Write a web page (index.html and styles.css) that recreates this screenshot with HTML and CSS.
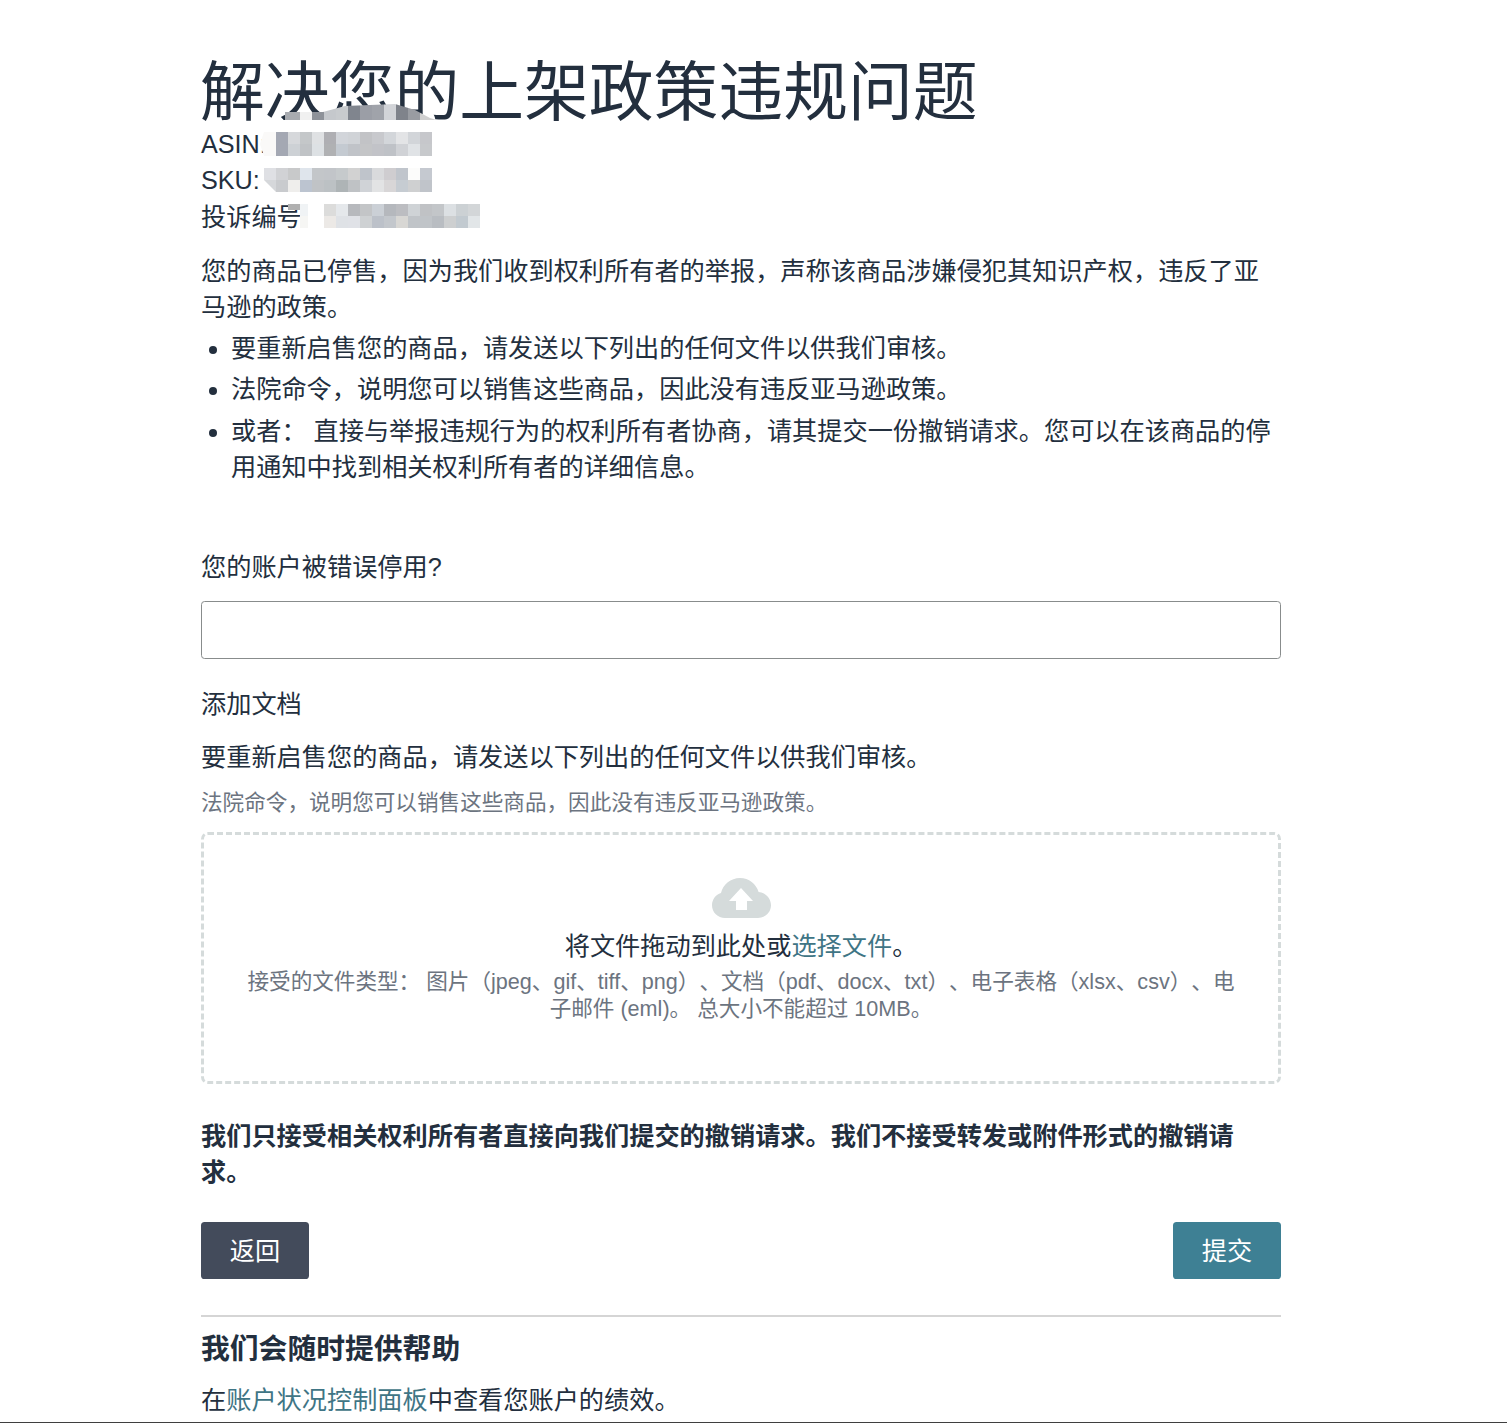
FILE: index.html
```html
<!DOCTYPE html>
<html lang="zh-CN">
<head>
<meta charset="utf-8">
<title>解决您的上架政策违规问题</title>
<link rel="stylesheet" href="styles.css">
</head>
<body>
<main class="page">
  <h1 class="title">解决您的上架政策违规问题</h1>
  <div class="meta">
    <div class="line">ASIN:</div>
    <div class="line">SKU:</div>
    <div class="line line-cjk">投诉编号:</div>
  </div>
  <p class="intro">您的商品已停售，因为我们收到权利所有者的举报，声称该商品涉嫌侵犯其知识产权，违反了亚马逊的政策。</p>
  <ul class="reasons">
    <li>要重新启售您的商品，请发送以下列出的任何文件以供我们审核。</li>
    <li>法院命令，说明您可以销售这些商品，因此没有违反亚马逊政策。</li>
    <li>或者： 直接与举报违规行为的权利所有者协商，请其提交一份撤销请求。您可以在该商品的停用通知中找到相关权利所有者的详细信息。</li>
  </ul>
  <label class="field-label" for="reason">您的账户被错误停用?</label>
  <input class="field" id="reason" type="text">
  <div class="add-title">添加文档</div>
  <p class="add-text">要重新启售您的商品，请发送以下列出的任何文件以供我们审核。</p>
  <p class="add-hint">法院命令，说明您可以销售这些商品，因此没有违反亚马逊政策。</p>
  <section class="drop">
    <svg class="cloud" viewBox="0 0 59 40" width="59" height="40" aria-hidden="true">
      <path fill="#d5dbdb" d="M13 40C5.800 40 0 34.400 0 27.300 0 21.600 3.700 16.800 9 15.100 11 6.500 18.800 0 28 0c8.800 0 16.300 5.900 18.600 14C53.500 14.500 59 20.200 59 27.300 59 34.400 53.200 40 46 40Z"/>
      <path fill="#fff" d="M29 10 41 23H35V32H24V23H17Z"/>
    </svg>
    <div class="drop-main">将文件拖动到此处或<a class="link" href="#">选择文件</a>。</div>
    <div class="drop-types">接受的文件类型： 图片（jpeg、gif、tiff、png）、文档（pdf、docx、txt）、电子表格（xlsx、csv）、电子邮件 (eml)。 总大小不能超过 10MB。</div>
  </section>
  <p class="notice">我们只接受相关权利所有者直接向我们提交的撤销请求。我们不接受转发或附件形式的撤销请求。</p>
  <div class="actions">
    <button class="btn btn-back" type="button">返回</button>
    <button class="btn btn-submit" type="button">提交</button>
  </div>
  <hr class="rule">
  <h2 class="help-title">我们会随时提供帮助</h2>
  <p class="help-text">在<a class="link" href="#">账户状况控制面板</a>中查看您账户的绩效。</p>
</main>
<div class="page-end"></div>

<svg class="mosaic" width="1507" height="240" viewBox="0 0 1507 240" aria-hidden="true">
  <defs>
    <clipPath id="hump"><polygon points="285,120 285,112 323,112 345,106 395,104 415,110 430,118 440,121"/></clipPath>
  </defs>
  <g clip-path="url(#hump)">
    <rect x="284" y="100" width="16" height="20" fill="#a8abb0"/>
    <rect x="300" y="100" width="12" height="20" fill="#f0f0f0"/>
    <rect x="312" y="100" width="12" height="20" fill="#8e9299"/>
    <rect x="324" y="100" width="12" height="20" fill="#c5c8cc"/>
    <rect x="336" y="100" width="12" height="20" fill="#c8cbce"/>
    <rect x="348" y="100" width="12" height="20" fill="#80858e"/>
    <rect x="360" y="100" width="12" height="20" fill="#9b9ea6"/>
    <rect x="372" y="100" width="12" height="20" fill="#a0a3aa"/>
    <rect x="384" y="100" width="12" height="20" fill="#d2d4d8"/>
    <rect x="396" y="100" width="12" height="20" fill="#7f838b"/>
    <rect x="408" y="100" width="12" height="20" fill="#999ca2"/>
    <rect x="420" y="100" width="20" height="20" fill="#d0d0d0"/>
  </g>
  <rect x="276" y="120" width="168" height="12" fill="#ffffff"/>
  <polygon points="260,144 264,132 276,132 276,156 264,156" fill="#faf9f8"/>
  <g>
    <rect x="276" y="132" width="12" height="24" fill="#a4a8b3"/>
    <rect x="288" y="132" width="12" height="12" fill="#d6d8db"/><rect x="288" y="144" width="12" height="12" fill="#cdd1d5"/>
    <rect x="300" y="132" width="12" height="12" fill="#c4c7c9"/><rect x="300" y="144" width="12" height="12" fill="#c0c3c6"/>
    <rect x="312" y="132" width="12" height="12" fill="#dfe1e3"/><rect x="312" y="144" width="12" height="12" fill="#dde1e4"/>
    <rect x="324" y="132" width="12" height="12" fill="#afafb3"/><rect x="324" y="144" width="12" height="12" fill="#b0b1b3"/>
    <rect x="336" y="132" width="12" height="12" fill="#d2d5da"/><rect x="336" y="144" width="12" height="12" fill="#c4cad1"/>
    <rect x="348" y="132" width="12" height="12" fill="#d0d3d7"/><rect x="348" y="144" width="12" height="12" fill="#c0c3c8"/>
    <rect x="360" y="132" width="12" height="12" fill="#c2c3c6"/><rect x="360" y="144" width="12" height="12" fill="#c4c5c7"/>
    <rect x="372" y="132" width="12" height="12" fill="#c8c9cd"/><rect x="372" y="144" width="12" height="12" fill="#c2c3c8"/>
    <rect x="384" y="132" width="12" height="12" fill="#d3d6da"/><rect x="384" y="144" width="12" height="12" fill="#bfc2c7"/>
    <rect x="396" y="132" width="12" height="12" fill="#e3e4e6"/><rect x="396" y="144" width="12" height="12" fill="#d0d2d6"/>
    <rect x="408" y="132" width="12" height="12" fill="#d2d5d9"/><rect x="408" y="144" width="12" height="12" fill="#e0e3e6"/>
    <rect x="420" y="132" width="12" height="12" fill="#c6c7cb"/><rect x="420" y="144" width="12" height="12" fill="#c7c9cc"/>
  </g>
  <g>
    <rect x="264" y="168" width="12" height="12" fill="#dfe0e4"/><polygon points="264,180 276,180 276,192" fill="#d5d7da"/>
    <rect x="276" y="168" width="12" height="12" fill="#d1d2d5"/><rect x="276" y="180" width="12" height="12" fill="#c9cbce"/>
    <rect x="288" y="168" width="12" height="12" fill="#c8c9ca"/><rect x="288" y="180" width="12" height="12" fill="#efeeec"/>
    <rect x="300" y="168" width="12" height="12" fill="#dfe5ec"/><rect x="300" y="180" width="12" height="12" fill="#bcc4d0"/>
    <rect x="312" y="168" width="12" height="12" fill="#c3c6c9"/><rect x="312" y="180" width="12" height="12" fill="#c0c3c6"/>
    <rect x="324" y="168" width="12" height="12" fill="#c2c5c9"/><rect x="324" y="180" width="12" height="12" fill="#bcc1c4"/>
    <rect x="336" y="168" width="12" height="12" fill="#c6cacc"/><rect x="336" y="180" width="12" height="12" fill="#aeb4b6"/>
    <rect x="348" y="168" width="12" height="12" fill="#d2d2d2"/><rect x="348" y="180" width="12" height="12" fill="#bfc2c5"/>
    <rect x="360" y="168" width="12" height="12" fill="#bfc4cb"/><rect x="360" y="180" width="12" height="12" fill="#d0d3d7"/>
    <rect x="372" y="168" width="12" height="12" fill="#d9dadc"/><rect x="372" y="180" width="12" height="12" fill="#e2e3e4"/>
    <rect x="384" y="168" width="12" height="12" fill="#cfcdd0"/><rect x="384" y="180" width="12" height="12" fill="#d8d6d7"/>
    <rect x="396" y="168" width="12" height="12" fill="#c0c5cc"/><rect x="396" y="180" width="12" height="12" fill="#c6ccd2"/>
    <rect x="408" y="168" width="12" height="12" fill="#fcfcfb"/><rect x="408" y="180" width="12" height="12" fill="#cfd0d1"/>
    <rect x="420" y="168" width="12" height="12" fill="#c5c9d0"/><rect x="420" y="180" width="12" height="12" fill="#c0c4ca"/>
  </g>
  <g>
    <rect x="288" y="204" width="12" height="6" fill="#b0b0b0"/>
    <rect x="300" y="204" width="8" height="12" fill="#f0f3f5"/>
    <rect x="300" y="216" width="8" height="12" fill="#f6f6f4"/>
    <rect x="324" y="204" width="12" height="12" fill="#dcdcdb"/><rect x="324" y="216" width="12" height="12" fill="#ece9e6"/>
    <rect x="336" y="204" width="12" height="12" fill="#e5e8eb"/><rect x="336" y="216" width="12" height="12" fill="#dfe2e6"/>
    <rect x="348" y="204" width="12" height="12" fill="#b7b9bd"/><rect x="348" y="216" width="12" height="12" fill="#e0e2e7"/>
    <rect x="360" y="204" width="12" height="12" fill="#c3c5c7"/><rect x="360" y="216" width="12" height="12" fill="#ced1d3"/>
    <rect x="372" y="204" width="12" height="12" fill="#cbd0d6"/><rect x="372" y="216" width="12" height="12" fill="#bcc1c9"/>
    <rect x="384" y="204" width="12" height="12" fill="#b5b8bd"/><rect x="384" y="216" width="12" height="12" fill="#c3c7cc"/>
    <rect x="396" y="204" width="12" height="12" fill="#bcbdc1"/><rect x="396" y="216" width="12" height="12" fill="#d8d7d4"/>
    <rect x="408" y="204" width="12" height="12" fill="#cfd3d6"/><rect x="408" y="216" width="12" height="12" fill="#c0c4c8"/>
    <rect x="420" y="204" width="12" height="12" fill="#c0c2c5"/><rect x="420" y="216" width="12" height="12" fill="#c0c4c8"/>
    <rect x="432" y="204" width="12" height="12" fill="#c3c6c9"/><rect x="432" y="216" width="12" height="12" fill="#b9bdc2"/>
    <rect x="444" y="204" width="12" height="12" fill="#dce0e3"/><rect x="444" y="216" width="12" height="12" fill="#cdcfd0"/>
    <rect x="456" y="204" width="12" height="12" fill="#ccd1d4"/><rect x="456" y="216" width="12" height="12" fill="#c2cad0"/>
    <rect x="468" y="204" width="12" height="12" fill="#d3d6d8"/><rect x="468" y="216" width="12" height="12" fill="#e2e6e8"/>
  </g>
</svg>
</body>
</html>
```

FILE: styles.css
```css
* { box-sizing: border-box; }
html, body { margin: 0; padding: 0; background: #fff; }
body {
  position: relative;
  height: 1423px;
  overflow: hidden;
  color: #232f3e;
  font-family: "Liberation Sans", "Noto Sans CJK SC", sans-serif;
  font-size: 25.2px;
  line-height: 36px;
  text-spacing-trim: space-all;
}
.page {
  width: 1080px;
  height: 1422px;
  margin-left: 201px;
  padding-top: 56.7px;
}
.title {
  margin: 0 0 -2px -1px;
  font-size: 64.8px;
  font-weight: 400;
  line-height: 71.3px;
}
.meta { margin-bottom: 19px; }
.line { height: 36px; }
.line-cjk { padding-top: 1px; }
.intro { margin: 0 0 5px; }
.reasons { margin: 0 0 64px; padding-left: 30px; }
.reasons li { margin-bottom: 5.4px; }
.field-label { display: block; margin-bottom: 16px; }
.field {
  display: block;
  width: 100%;
  height: 58px;
  margin-bottom: 27px;
  border: 1.8px solid #888c8c;
  border-radius: 3.6px;
  background: #fff;
}
.add-title { margin-bottom: 17px; }
.add-text { margin: 0 0 12px; }
.add-hint {
  margin: 0 0 13px;
  color: #6c7480;
  font-size: 21.6px;
  line-height: 32.4px;
}
.drop {
  display: flex;
  flex-direction: column;
  align-items: center;
  height: 252px;
  padding: 43px 40px 0;
  border: 3px dashed #d5dbdb;
  border-radius: 7px;
  text-align: center;
}
.cloud { display: block; margin-bottom: 10px; }
.drop-main { margin-bottom: 4px; }
.drop-types {
  color: #6c7480;
  font-size: 21.6px;
  line-height: 27px;
}
.link { color: #3f7585; text-decoration: none; }
.notice { margin: 34px 0 32px; font-weight: 700; }
.actions { display: flex; justify-content: space-between; margin-bottom: 36px; }
.btn {
  width: 108px;
  height: 57px;
  padding: 0;
  border: 0;
  border-radius: 3.6px;
  color: #fff;
  font: inherit;
}
.btn-back { background: #434b5b; }
.btn-submit { background: #3e8094; }
.rule { height: 2px; margin: 0 0 14px; border: 0; background: #d5d5d5; }
.help-title {
  margin: 0 0 15px;
  font-size: 28.8px;
  font-weight: 700;
  line-height: 36px;
}
.help-text { margin: 0; }
.page-end { height: 1px; background: #3f3f3f; }
.mosaic { position: absolute; left: 0; top: 0; pointer-events: none; }
```
